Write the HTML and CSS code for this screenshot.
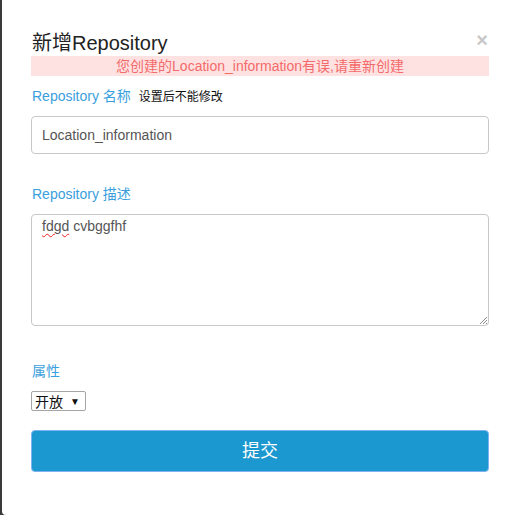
FILE: index.html
```html
<!DOCTYPE html>
<html>
<head>
<meta charset="utf-8">
<link rel="stylesheet" href="styles.css">
</head>
<body>
<div class="modal">
  <div class="header">
    <h4 class="title">新增Repository</h4>
    <span class="close">×</span>
  </div>
  <div class="error">您创建的Location_information有误,请重新创建</div>
  <div class="label">Repository 名称 <span class="hint">设置后不能修改</span></div>
  <div class="input">Location_information</div>
  <div class="label gap-lg">Repository 描述</div>
  <div class="textarea"><span class="spell">fdgd</span> cvbggfhf
    <svg class="grip" width="8" height="8" viewBox="0 0 8 8"><path d="M1 8 L8 1 M4 8 L8 4 M7 8 L8 7" stroke="#888" stroke-width="1"/></svg>
  </div>
  <div class="label gap-xl">属性</div>
  <div class="select"><span>开放</span><span class="arrow">▼</span></div>
  <div class="button">提交</div>
</div>
</body>
</html>
```
FILE: styles.css
```css
html, body {
  margin: 0;
  padding: 0;
  height: 100%;
}
body {
  background: #3a3a3a;
  font-family: "Liberation Sans", "Noto Sans CJK SC", sans-serif;
  overflow: hidden;
}
.modal {
  margin-left: 2px;
  height: 515px;
  background: #fff;
  padding: 32px 30px 0 29px;
  box-sizing: border-box;
  display: flex;
  flex-direction: column;
  border-bottom-left-radius: 4px;
}
.header {
  display: flex;
  justify-content: space-between;
  align-items: flex-start;
}
.title {
  margin: 0;
  font-size: 20px;
  font-weight: normal;
  line-height: 22px;
  color: #222;
  padding-left: 1px;
}
.close {
  font-size: 20px;
  font-weight: bold;
  line-height: 14px;
  color: #c8c8c8;
  margin-right: 1px;
  margin-top: 1px;
}
.error {
  margin-top: 2px;
  height: 20px;
  line-height: 20px;
  background: #fee2e2;
  color: #f46a6a;
  font-size: 14px;
  text-align: center;
}
.label {
  margin-top: 10px;
  height: 20px;
  line-height: 20px;
  font-size: 14px;
  color: #3aa0dd;
  padding-left: 1px;
}
.label.gap-lg { margin-top: 30px; }
.label.gap-xl { margin-top: 35px; }
.hint {
  color: #111;
  font-size: 12px;
  margin-left: 4px;
}
.input {
  margin-top: 10px;
  height: 38px;
  box-sizing: border-box;
  border: 1px solid #c8c8c8;
  border-radius: 4px;
  padding: 0 10px;
  line-height: 36px;
  font-size: 14px;
  color: #555;
}
.textarea {
  position: relative;
  margin-top: 10px;
  height: 112px;
  box-sizing: border-box;
  border: 1px solid #c8c8c8;
  border-radius: 4px;
  padding: 2px 10px;
  line-height: 18px;
  font-size: 14px;
  color: #555;
}
.spell {
  text-decoration: underline wavy #e22;
  text-decoration-thickness: 1px;
  text-underline-offset: 2px;
}
.grip {
  position: absolute;
  right: 1px;
  bottom: 1px;
}
.select {
  margin-top: 10px;
  align-self: flex-start;
  width: 55px;
  height: 20px;
  box-sizing: border-box;
  border: 1px solid #a6a6a6;
  border-radius: 2px;
  display: flex;
  align-items: center;
  justify-content: space-between;
  padding: 0 5px 0 3px;
  font-size: 14px;
  color: #111;
}
.arrow {
  font-size: 10px;
}
.button {
  margin-top: 19px;
  height: 42px;
  box-sizing: border-box;
  background: #1b98cf;
  border: 1px solid #7fb2f2;
  border-radius: 4px;
  color: #fff;
  font-size: 18px;
  line-height: 40px;
  text-align: center;
}
```
